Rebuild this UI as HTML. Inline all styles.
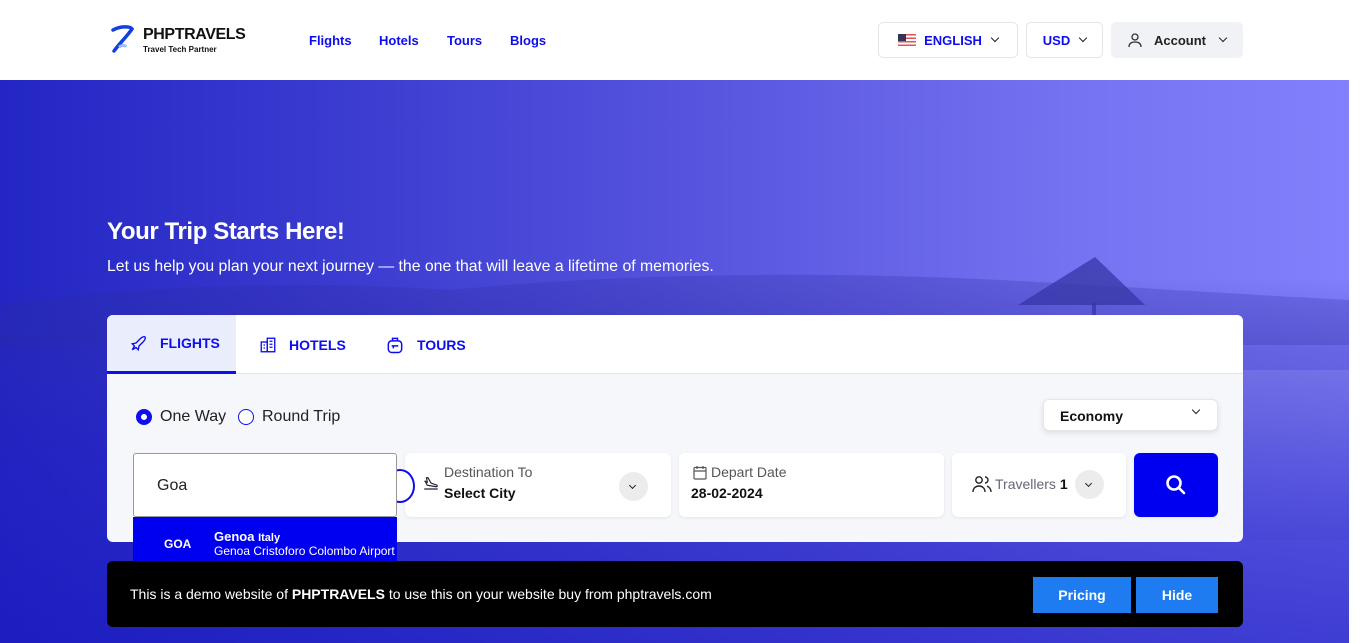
<!DOCTYPE html>
<html><head><meta charset="utf-8"><style>
*{box-sizing:border-box;margin:0;padding:0}
body{width:1366px;height:643px;overflow:hidden;background:#fff;font-family:"Liberation Sans",Arial,sans-serif;position:relative}
.page{position:absolute;left:0;top:0;width:1349px;height:643px}
header{height:80px;background:#fff;position:relative}
.hero{position:absolute;top:80px;left:0;width:1349px;height:563px;
background:linear-gradient(180deg,rgba(20,20,160,0) 0%,rgba(20,20,170,0) 35%,rgba(40,40,170,.3) 48%,rgba(30,30,190,.45) 70%,rgba(25,25,190,.65) 100%),linear-gradient(90deg,#2326c4 0%,#3a3bd0 25%,#5a58e0 55%,#7673f2 80%,#8380fc 100%)}
.logo{position:absolute;left:110px;top:25px}
.logo b{position:absolute;left:33px;top:1px;font-size:16px;color:#111;white-space:nowrap;letter-spacing:-.4px}
.logo small{position:absolute;left:33px;top:20px;font-size:8px;font-weight:bold;color:#111;white-space:nowrap}
nav a{position:absolute;top:33px;font-size:13px;font-weight:bold;color:#0d0df0;text-decoration:none}
.btn{position:absolute;top:22px;height:36px;border:1px solid #e2e4ea;border-radius:5px;background:#fff;font-size:13px;font-weight:bold;color:#0d0df0;display:flex;align-items:center;justify-content:center;gap:8px}
.chev{display:inline-block;width:6px;height:6px;border-right:1.6px solid #222;border-bottom:1.6px solid #222;transform:rotate(45deg);margin-top:-4px;margin-left:2px}
h1{position:absolute;left:107px;top:218px;color:#fff;font-size:24px;font-weight:bold;letter-spacing:-.4px}
.sub{position:absolute;left:107px;top:258px;color:#fff;font-size:15.8px}
.card{position:absolute;left:107px;top:315px;width:1136px;height:227px;background:#f6f7fa;border-radius:6px;overflow:hidden}
.tabs{height:59px;background:#fff;border-bottom:1px solid #e4e6ec;position:relative}
.tab{position:absolute;top:0;height:59px;display:flex;align-items:center;gap:12px;font-size:14px;font-weight:bold;color:#0d0df0}
.radio{position:absolute;top:409px;width:16px;height:16px;border-radius:50%;border:1.5px solid #0d0df0;background:#fff}
.rl{position:absolute;top:408px;font-size:16px;color:#222}
.box{position:absolute;top:453px;height:64px;background:#fff;border-radius:6px;box-shadow:0 1px 3px rgba(0,0,0,.08)}
.lbl{position:absolute;font-size:14px;color:#555}
.val{position:absolute;font-size:14px;font-weight:bold;color:#111}
.circ{position:absolute;width:29px;height:29px;border-radius:50%;background:#ececec}
.circ .chev{position:absolute;left:11px;top:11px;width:5px;height:5px;margin:0;border-width:1.3px}
.demo{position:absolute;left:107px;top:561px;width:1136px;height:66px;background:#000;border-radius:6px;color:#fff;font-size:14px}
.db{position:absolute;top:16px;height:36px;background:#1e7bf0;color:#fff;font-size:14px;font-weight:bold;display:flex;align-items:center;justify-content:center}
</style></head><body><div class="page">
<header>
<div class="logo"><svg width="26" height="28" viewBox="0 0 26 28"><path d="M3 5 C10 1 20 1 22 4 C18 10 10 18 4 26" stroke="#1040e0" stroke-width="3.5" fill="none" stroke-linecap="round"/><path d="M9 22 C12 20 15 20 16 22" stroke="#9ec0f5" stroke-width="3" fill="none"/></svg><b>PHPTRAVELS</b><small>Travel Tech Partner</small></div>
<nav><a style="left:309px">Flights</a><a style="left:379px">Hotels</a><a style="left:447px">Tours</a><a style="left:510px">Blogs</a></nav>
<div class="btn" style="left:878px;width:140px"><svg width="18" height="13" viewBox="0 0 18 13"><rect width="18" height="13" fill="#fff"/><g fill="#d55"><rect y="0" width="18" height="1.5"/><rect y="3.5" width="18" height="1.5"/><rect y="7" width="18" height="1.5"/><rect y="10.5" width="18" height="1.5"/></g><rect width="8" height="7" fill="#335"/></svg>ENGLISH<span class="chev"></span></div>
<div class="btn" style="left:1026px;width:77px">USD<span class="chev"></span></div>
<div class="btn" style="left:1111px;width:132px;background:#f1f2f5;border-color:#f1f2f5;color:#222"><svg width="14" height="16" viewBox="0 0 14 16" fill="none" stroke="#333" stroke-width="1.3"><circle cx="7" cy="5" r="3"/><path d="M1 15c0-4 3-5 6-5s6 1 6 5"/></svg>&nbsp;Account&nbsp;<span class="chev"></span></div>
</header>
<div class="hero">
<svg style="position:absolute;left:0;top:185px" width="1349" height="80" viewBox="0 0 1349 80"><path d="M0 40 C150 20 300 15 450 25 C600 10 800 5 1000 15 C1100 20 1250 30 1349 35 L1349 80 L0 80Z" fill="#2a2aa0" opacity=".25"/></svg>
<svg style="position:absolute;left:1010px;top:175px" width="140" height="70" viewBox="0 0 140 70"><path d="M8 50 L85 2 L135 50 Z" fill="#3535a5" opacity=".75"/><rect x="82" y="48" width="4" height="22" fill="#3535a5" opacity=".75"/></svg>
<div style="position:absolute;left:1243px;top:290px;width:106px;height:170px;background:linear-gradient(180deg,rgba(200,200,255,.15),rgba(60,60,200,.2))"></div>
</div>
<h1>Your Trip Starts Here!</h1>
<div class="sub">Let us help you plan your next journey — the one that will leave a lifetime of memories.</div>
<div class="card">
<div class="tabs">
<div class="tab" style="left:0;width:129px;padding-left:23px;background:#eaeefc;border-bottom:3px solid #0d0df0"><svg width="18" height="18" viewBox="0 0 24 24" fill="none" stroke="#0d0df0" stroke-width="1.8"><path d="M3 21l5-3 3 3 1-5 6-6c2-2 3-5 2-6-1-1-4 0-6 2l-6 6-5 1 3 3z"/></svg>FLIGHTS</div>
<div class="tab" style="left:152px"><svg width="18" height="18" viewBox="0 0 24 24" fill="none" stroke="#0d0df0" stroke-width="1.8"><rect x="3" y="8" width="8" height="13"/><rect x="11" y="3" width="10" height="18"/><path d="M14 7h4M14 11h4M14 15h4M6 12h2M6 16h2"/></svg>HOTELS</div>
<div class="tab" style="left:278px"><svg width="20" height="20" viewBox="0 0 24 24" fill="none" stroke="#0d0df0" stroke-width="1.8"><rect x="4" y="7" width="16" height="14" rx="4"/><path d="M9 7V4h6v3M8 13h8M10 13v3"/></svg>TOURS</div>
</div>
</div>
<div class="radio" style="left:136px;border-width:5px"></div><div class="rl" style="left:160px">One Way</div>
<div class="radio" style="left:238px"></div><div class="rl" style="left:262px">Round Trip</div>
<div class="box" style="left:1043px;top:399px;width:175px;height:32px;border:1px solid #e6e6e6;box-shadow:0 2px 6px rgba(0,0,0,.1)"><span class="val" style="left:16px;top:8px">Economy</span><span class="chev" style="position:absolute;right:18px;top:11px"></span></div>
<div class="box" style="left:405px;width:266px"><svg style="position:absolute;left:17px;top:21px" width="18" height="18" viewBox="0 0 24 24" fill="none" stroke="#223" stroke-width="1.6"><path d="M3 20h18M4 9l3 6 12 2c1 0 2-1 1-2l-8-3-4-7-2 0 1 6-3-1z"/></svg><span class="lbl" style="left:39px;top:11px">Destination To</span><span class="val" style="left:39px;top:32px">Select City</span><div class="circ" style="left:214px;top:19px"><span class="chev"></span></div></div>
<div style="position:absolute;left:385px;top:469px;width:30px;height:34px;border-radius:50%;border:2px solid #0d0df0;background:#fff"></div>
<div class="box" style="left:133px;width:264px;border:1px solid #999;border-radius:3px;box-shadow:none;height:64px"><span style="position:absolute;left:23px;top:23px;font-size:16px;color:#222">Goa</span></div>
<div style="position:absolute;left:133px;top:517px;width:264px;height:44px;background:#0000f0;color:#fff;overflow:hidden;white-space:nowrap"><b style="position:absolute;left:31px;top:20px;font-size:12px">GOA</b><span style="position:absolute;left:81px;top:12px;font-size:13px;font-weight:bold">Genoa <small style="font-size:11px">Italy</small></span><span style="position:absolute;left:81px;top:27px;font-size:12px">Genoa Cristoforo Colombo Airport</span></div>
<div class="box" style="left:679px;width:265px"><svg style="position:absolute;left:14px;top:12px" width="14" height="15" viewBox="0 0 14 15" fill="none" stroke="#555" stroke-width="1.2"><rect x="1" y="2.5" width="12" height="11.5" rx="1"/><path d="M1 6h12M4 1v3M10 1v3"/></svg><span class="lbl" style="left:32px;top:11px">Depart Date</span><span class="val" style="left:12px;top:32px">28-02-2024</span></div>
<div class="box" style="left:952px;width:174px"><svg style="position:absolute;left:20px;top:22px" width="20" height="18" viewBox="0 0 20 18" fill="none" stroke="#222" stroke-width="1.4"><circle cx="7" cy="5" r="3.2"/><path d="M1 17c0-4 3-6 6-6s6 2 6 6M13 2a3 3 0 010 6M15 11c2 1 4 3 4 6"/></svg><span class="lbl" style="left:43px;top:23px;color:#667">Travellers <b style="color:#111">1</b></span><div class="circ" style="left:123px;top:17px"><span class="chev"></span></div></div>
<div class="box" style="left:1134px;width:84px;background:#0000f0"><svg style="position:absolute;left:31px;top:21px" width="22" height="22" viewBox="0 0 22 22" fill="none" stroke="#fff" stroke-width="2.6" stroke-linecap="round"><circle cx="9" cy="9" r="6.5"/><path d="M14 14l5 5"/></svg></div>
<div class="demo"><span style="position:absolute;left:23px;top:25px">This is a demo website of <b>PHPTRAVELS</b> to use this on your website buy from phptravels.com</span><div class="db" style="left:926px;width:98px">Pricing</div><div class="db" style="left:1029px;width:82px">Hide</div></div>
</div></body></html>
